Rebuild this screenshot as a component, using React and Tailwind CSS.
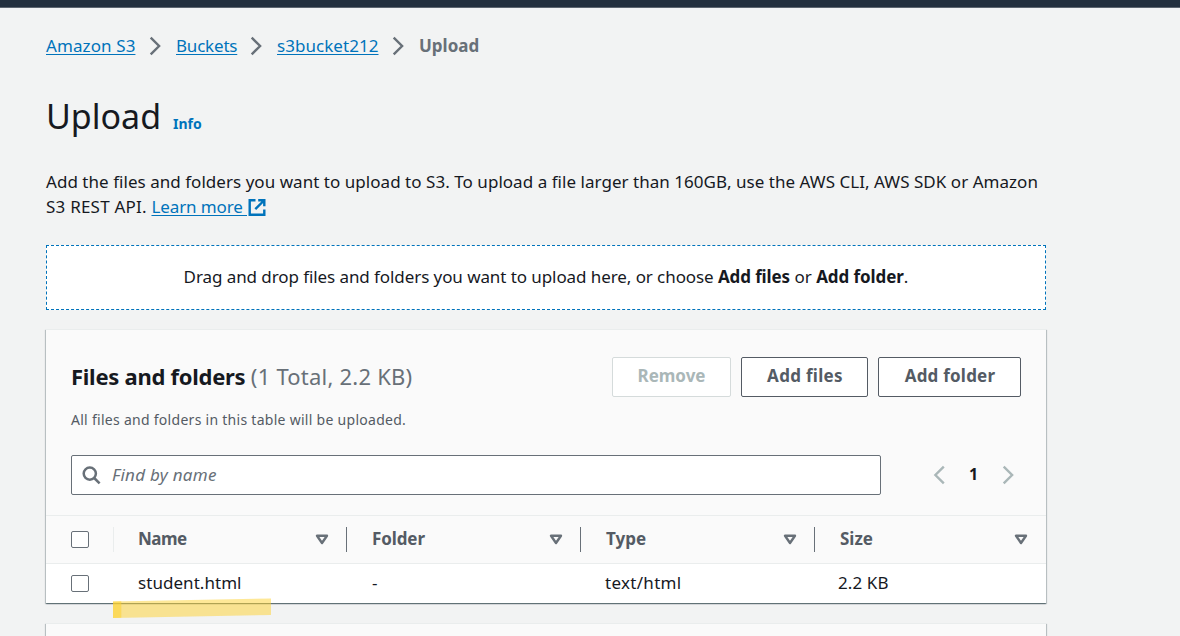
const Chevron = ({ className, left }) => (
  <svg className={className} width="14" height="20" viewBox="0 0 14 20" fill="none" stroke="currentColor" strokeWidth="2.4">
    <path d={left ? "M11.8 1.7 3.4 10l8.4 8.3" : "M2.7 1.7 11.1 10l-8.4 8.3"} />
  </svg>
);

const SortIcon = () => (
  <svg className="shrink-0 text-[#687078]" width="14" height="11" viewBox="0 0 14 11" fill="none" stroke="currentColor" strokeWidth="2.4" strokeLinejoin="round">
    <path d="M2 1.7h10L7 9Z" />
  </svg>
);

const Checkbox = () => <span className="block h-[17px] w-[18px] rounded-xs border border-[#687078] bg-white" />;

const columns = [
  { name: "Name", tracking: "tracking-[-0.5px]", width: "w-[233px]", pad: "pl-[24px] pr-[17px]", last: false },
  { name: "Folder", tracking: "tracking-[-0.1px]", width: "w-[234px]", pad: "pl-[25px] pr-[17px]", last: false },
  { name: "Type", tracking: "tracking-normal", width: "w-[234px]", pad: "pl-[25px] pr-[17px]", last: false },
  { name: "Size", tracking: "tracking-normal", width: "w-[231px]", pad: "pl-[25px] pr-[18px]", last: true },
];

const card =
  "border-t border-[#eaeded] shadow-[0_1px_1px_0_rgba(0,28,36,0.4),1px_1px_1px_0_rgba(0,28,36,0.18),-1px_1px_1px_0_rgba(0,28,36,0.18)]";

export default function App() {
  return (
    <div className="relative h-[636px] w-[1180px] overflow-hidden bg-[#f2f3f3] font-['Noto_Sans',sans-serif] text-[17px] leading-[25px] text-[#16191f]">
      <header className="h-2 border-b border-[#5d6570] bg-[#232f3e]" />
      <main className="ml-[46px] w-[1000px]">
        <nav className="flex h-[50px] items-end text-[#0073bb]">
          <a href="#" className="w-[89px] whitespace-nowrap underline underline-offset-2 decoration-1 tracking-[0.1px]">Amazon S3</a>
          <Chevron className="ml-[13px] mr-[14px] mb-[2px] text-[#687078]" />
          <a href="#" className="w-[61px] whitespace-nowrap underline underline-offset-2 decoration-1 tracking-[-0.2px]">Buckets</a>
          <Chevron className="ml-[12px] mr-[14px] mb-[2px] text-[#687078]" />
          <a href="#" className="w-[102px] whitespace-nowrap underline underline-offset-2 decoration-1 tracking-[0.05px]">s3bucket212</a>
          <Chevron className="ml-[12px] mr-[14px] mb-[2px] text-[#687078]" />
          <span className="font-bold text-[#687078]">Upload</span>
        </nav>

        <div className="mt-[38px] flex items-baseline">
          <h1 className="w-[127px] text-[34px] leading-10">Upload</h1>
          <a href="#" className="text-sm font-bold text-[#0073bb]">Info</a>
        </div>

        <p className="mt-[33px] whitespace-nowrap">
          <span className="tracking-[0.038px]">Add the files and folders you want to upload to S3. To upload a file larger than 160GB, use the AWS CLI, AWS SDK or Amazon</span>
          <br />
          <span className="tracking-[0.22px]">S3 REST API. </span>
          <a href="#" className="text-[#0073bb]">
            <span className="underline underline-offset-2 decoration-1 tracking-[-0.12px]">Learn more </span>
            <svg className="inline-block align-[-4px]" width="20" height="20" viewBox="0 0 20 20" fill="none" stroke="currentColor" strokeWidth="2.4">
              <path d="M8.5 3.2H2.7v14.6h14.6v-5.3M11.2 3.2h6.1v6.1M17 3.5 8.3 12.2" />
            </svg>
          </a>
        </p>

        <div className="mt-[26px] flex h-[65px] items-center justify-center whitespace-pre border border-dashed border-[#0073bb] bg-white pb-[2px]">
          <span className="tracking-[-0.08px]">Drag and drop files and folders you want to upload here, or choose </span>
          <b className="tracking-[-0.12px]">Add files</b>
          <span> or </span>
          <b className="tracking-[-0.07px]">Add folder</b>.
        </div>

        <section className={"mt-[19px] h-[274px] bg-[#fafafa] " + card}>
          <div className="flex h-[125px] justify-between px-[25px] pt-[27px]">
            <div>
              <h2 className="mt-[4px] whitespace-pre text-[22px] leading-[30px]">
                <b className="tracking-[-0.27px]">Files and folders </b>
                <span className="text-[#687078] tracking-[0.22px]">(1 Total, 2.2 KB)</span>
              </h2>
              <p className="mt-[18px] text-sm leading-[22px] text-[#545b64] tracking-[0.28px]">All files and folders in this table will be uploaded.</p>
            </div>
            <div className="flex gap-[10px] font-bold text-[#545b64]">
              <button className="h-10 w-[119px] rounded-xs border border-[#d5dbdb] bg-white pb-[4px] text-[#aab7b8]">Remove</button>
              <button className="h-10 w-[127px] rounded-xs border border-[#545b64] bg-white pb-[4px] pl-[1px] tracking-[0.3px]">Add files</button>
              <button className="h-10 w-[143px] rounded-xs border border-[#545b64] bg-white pb-[4px] pl-[1px] tracking-[0.22px]">Add folder</button>
            </div>
          </div>

          <div className="flex h-[60px] items-start pl-[25px]">
            <div className="flex h-10 w-[810px] items-center rounded-xs border border-[#687078] bg-white pl-[10px] text-[#687078]">
              <svg width="20" height="20" viewBox="0 0 20 20" fill="none" stroke="currentColor" strokeWidth="2.5">
                <circle cx="7.8" cy="8.6" r="6.1" />
                <path d="m12.2 13 5.4 5.4" />
              </svg>
              <span className="mb-[2px] ml-[10px] italic tracking-[0.28px]">Find by name</span>
            </div>
            <div className="ml-[51px] flex h-10 items-center text-[#aab7b8]">
              <Chevron left />
              <b className="mb-[2px] w-[55px] text-center text-base text-[#16191f]">1</b>
              <Chevron />
            </div>
          </div>

          <div className="flex h-[49px] items-center border-y border-[#eaeded]">
            <div className="w-[67px] pl-[25px]"><Checkbox /></div>
            <div className="h-[25px] w-px bg-[#eaeded]" />
            {columns.map((c) => (
              <div key={c.name} className={"flex h-[25px] items-center justify-between " + c.width + " " + c.pad + (c.last ? "" : " border-r border-[#687078]")}>
                <span className={"mb-[2px] font-bold text-[#545b64] " + c.tracking}>{c.name}</span>
                <SortIcon />
              </div>
            ))}
          </div>

          <div className="flex h-[39px] items-center bg-white">
            <div className="w-[92px] pl-[25px]"><Checkbox /></div>
            <span className="mb-[2px] w-[234px] tracking-[0.05px]">student.html</span>
            <span className="mb-[2px] w-[233px]">-</span>
            <span className="mb-[2px] w-[233px] tracking-[0.3px]">text/html</span>
            <span className="mb-[2px] tracking-[0.1px]">2.2 KB</span>
          </div>
        </section>

        <section className={"mt-[20px] h-10 bg-[#fafafa] " + card} />
      </main>

      <svg className="absolute left-[112px] top-[597px]" width="160" height="22" viewBox="0 0 160 22">
        <path d="M1 4.5 159 1.5v16.5L1 21Z" fill="#fdd22f" fillOpacity="0.5" />
        <path d="M1 4.5 9.3 4.3v16.5L1 21Z" fill="#fdd22f" fillOpacity="0.55" />
      </svg>
    </div>
  );
}
